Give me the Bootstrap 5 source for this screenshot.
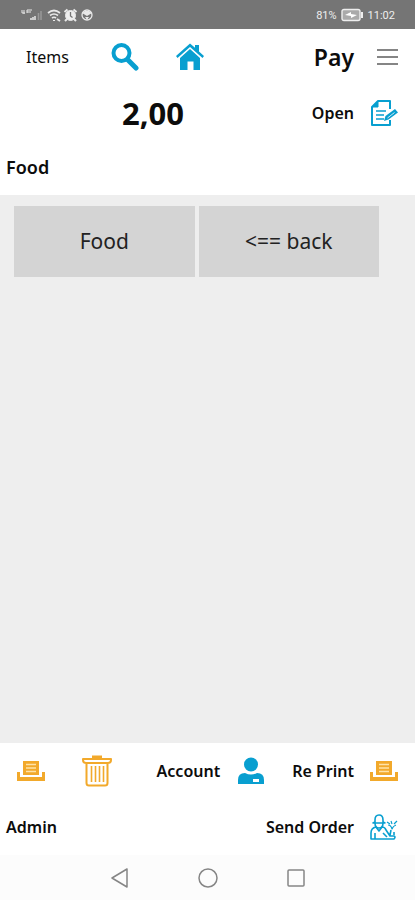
<!DOCTYPE html>
<html lang="en">
<head>
<meta charset="utf-8">
<meta name="viewport" content="width=device-width, initial-scale=1">
<title>Items</title>
<link rel="stylesheet" href="https://cdn.jsdelivr.net/npm/bootstrap@5.3.0/dist/css/bootstrap.min.css">
<style>
  body { font-family: "Noto Sans", "Open Sans", sans-serif; color: #0c0c0c; background: #fff; }
  button { font: inherit; color: inherit; border: 0; background: none; padding: 0; }
  svg { display: block; flex: none; }
  .status { height: 29px; background: #757575; color: #eee; padding: 1px 20px 0; font: 11px "Roboto", sans-serif; }
  .bar-row { height: 56px; }
  .bar-row.short { height: 55px; }
  .bar-row button { font-size: 16px; line-height: 24px; font-weight: 600; white-space: nowrap; }
  .bar-row .items { font-size: 16px; font-weight: 400; padding-left: 26px; width: 92px; text-align: left; }
  .bar-row .pay { font-size: 23px; }
  .c-icon { width: 61px; display: flex; justify-content: center; }
  .c-icon.last { justify-content: flex-end; padding-right: 17px; }
  .c-icon.wide { width: 72px; }
  .c-icon.lead-in { justify-content: flex-start; padding-left: 18px; }
  .c-icon.head { width: 65px; }
  .total { flex: 1; font-size: 31px; font-weight: 700; line-height: 40px; padding-left: 122px; }
  .path { font-size: 18px; font-weight: 600; padding: 0 6px; }
  .admin { margin-left: 6px; }
  .stage { background: #eee; padding: 11px 36px 11px 14px; }
  .tile { height: 71px; background: #d4d4d4; font-size: 21px; color: #222; }
  .tiles { gap: 4px; }
  .sysnav { height: 45px; background: #fcfcfc; }
  .sysnav button { width: 88px; display: flex; justify-content: center; }
  .blue { color: #089fd0; } .gold { color: #f2a92b; } .gray { color: #858585; }
</style>
</head>
<body class="d-flex flex-column min-vh-100">
<svg class="d-none" aria-hidden="true">
  <symbol id="printer" viewBox="0 0 28 22">
    <path d="M0 12h3v5h22v-5h3v9H0z" fill="currentColor"/>
    <path d="M6 1h16v14H6z" fill="currentColor"/><path d="M9 4.500h10M9 8h10M9 11.500h10" stroke="#ffe3a8" stroke-width="1.300"/>
  </symbol>
</svg>
<div class="status d-flex justify-content-between align-items-center">
  <svg width="76" height="16" viewBox="0 0 76 16" fill="none" stroke="#e8e8e8">
    <path d="M2 3v3h3M4 3v4M7 3h5M7 5h4M7 3v3" stroke-width="1"/>
    <path d="M11 13v-2M13 13v-3M15 13V9" stroke-width="1.500"/><path d="M18.500 13V6M21 13V4" stroke="#999" stroke-width="1.500"/>
    <path d="M28 6q6-5 12 0M30 8.500q4-3 8 0M32 11q2-1.500 4 0" stroke-width="1.700"/><path d="M34 13v1M37 12l3 2" stroke-width="2"/>
    <circle cx="50.500" cy="8.500" r="5" fill="#eee"/><path d="M44.500 5l3-2.500M56.500 5l-3-2.500M45 14l2-2M56 14l-2-2" stroke-width="2"/><path d="M50.500 5v4l2 1.500" stroke="#757575" stroke-width="1.300"/>
    <circle cx="67" cy="8" r="5" stroke-width="1.300"/><path d="M62 6l5 3 5-3-3-2h-4zM65 10h4l-2 3z" fill="#e8e8e8" stroke="none"/>
  </svg>
  <div class="d-flex align-items-center">
    <span>81%</span>
    <svg class="ms-1 me-1" width="23" height="14" viewBox="0 0 23 14"><rect x="1" y="1.500" width="18" height="11" rx="2" fill="#aaa" stroke="#eee" stroke-width="1.400"/><path d="M21 4v6" stroke="#eee" stroke-width="2"/><path d="M4 7l6-3v2l6 1-6 3V8z" fill="#fff"/></svg>
    <span>11:02</span>
  </div>
</div>
<header>
  <div class="bar-row d-flex align-items-center">
    <button class="items">Items</button>
    <div class="c-icon head"><button class="blue" aria-label="Search"><svg width="28" height="28" viewBox="0 0 28 28" fill="none" stroke="currentColor"><circle cx="10.500" cy="10" r="8" stroke-width="4"/><path d="M17 17l8 8" stroke-width="5" stroke-linecap="round"/></svg></button></div>
    <div class="c-icon head me-auto"><button class="blue" aria-label="Home"><svg width="28" height="28" viewBox="0 0 28 28" fill="currentColor"><path d="M0 13L14 .500l5 4.300V2h4v6.500L28 13l-1.500 2L14 4 1.500 15z"/><path d="M4 15L14 6l10 9v12h-6.500v-8.500h-6V27H4z"/></svg></button></div>
    <button class="pay">Pay</button>
    <div class="c-icon last"><button class="gray" aria-label="Menu"><svg width="21" height="20" viewBox="0 0 21 20" stroke="currentColor" stroke-width="2"><path d="M0 3h21M0 10h21M0 17h21"/></svg></button></div>
  </div>
  <div class="bar-row short d-flex align-items-center">
    <div class="total">2,00</div>
    <button>Open</button>
    <div class="c-icon last"><button class="blue" aria-label="Edit order"><svg width="28" height="28" viewBox="0 0 28 28" fill="none" stroke="currentColor" stroke-width="2"><path d="M20 10V2H8L2 8v18h18v-5" stroke-linejoin="round"/><path d="M8 2v6H2z" fill="currentColor" stroke-width="1"/><path d="M6 12h10M6 16h8M6 20h8" stroke-width="1.500"/><path d="M14 22l1.500-5 9.500-7 3 3.500-9.500 7z" fill="currentColor" stroke="none"/><path d="M17.500 19l7-5.500" stroke="#fff" stroke-width=".800"/></svg></button></div>
  </div>
  <div class="bar-row short d-flex align-items-center"><div class="path">Food</div></div>
</header>
<main class="stage flex-grow-1">
  <div class="tiles d-flex">
    <button class="tile w-50">Food</button>
    <button class="tile w-50">&lt;== back</button>
  </div>
</main>
<footer>
  <div class="bar-row d-flex align-items-center">
    <div class="c-icon"><button class="gold" aria-label="Print"><svg width="28" height="22"><use href="#printer"/></svg></button></div>
    <div class="c-icon wide me-auto"><button class="gold" aria-label="Delete"><svg width="30" height="32" viewBox="0 0 30 32" fill="none" stroke="currentColor" stroke-width="2"><path d="M11 3V1.500h8V3z" fill="currentColor"/><path d="M1 4h28v1q0 3-3 3H4Q1 8 1 5zM4.500 8v20q0 2.500 2.500 2.500h16q2.500 0 2.500-2.500V8" stroke-linejoin="round"/><path d="M9.500 11v16M13.500 11v16M17.500 11v16M21.500 11v16" stroke-width="1.600"/></svg></button></div>
    <button>Account</button>
    <div class="c-icon wide lead-in"><button class="blue" aria-label="Account profile"><svg width="26" height="28" viewBox="0 0 26 28" fill="currentColor"><circle cx="13" cy="7.500" r="7"/><path d="M0 27v-4q0-7 7-7 6 3 12 0 7 0 7 7v4z"/><path d="M15 22h6v3h-6z" fill="#fff"/></svg></button></div>
    <button>Re Print</button>
    <div class="c-icon last"><button class="gold" aria-label="Print again"><svg width="28" height="22"><use href="#printer"/></svg></button></div>
  </div>
  <div class="bar-row d-flex align-items-center">
    <button class="admin me-auto">Admin</button>
    <button>Send Order</button>
    <div class="c-icon last"><button class="blue" aria-label="Send to waiter"><svg width="28" height="28" viewBox="0 0 28 28" fill="none" stroke="currentColor" stroke-width="1.600" stroke-linejoin="round"><path d="M3 10l2-1V7q0-5 4-5t4 5v2l2 1zM5 10q0 5 4 5t4-5"/><path d="M6 14q-5 1-5 6v6h23q2-2 0-3h-4l-4-6q-1-3-4-3l-3 4zM5 20v6M13 20l4 4M20 22l1-5M24 22v-3"/><path d="M18 12q3 0 4 4 1-3 4-4M17 9l3 2M21 8l1 3M27 8l-3 3" stroke-width="1.200"/></svg></button></div>
  </div>
</footer>
<nav class="sysnav d-flex justify-content-center align-items-center gray" aria-label="System">
  <button aria-label="Back"><svg width="20" height="20" viewBox="0 0 20 20" fill="none" stroke="currentColor" stroke-width="1.500" stroke-linejoin="round"><path d="M17 1v18L2 10z"/></svg></button>
  <button aria-label="Home screen"><svg width="20" height="20" viewBox="0 0 20 20" fill="none" stroke="currentColor" stroke-width="1.500"><circle cx="10" cy="10" r="9"/></svg></button>
  <button aria-label="Recent apps"><svg width="20" height="20" viewBox="0 0 20 20" fill="none" stroke="currentColor" stroke-width="1.500"><rect x="2" y="2" width="16" height="16" rx="1"/></svg></button>
</nav>
<script src="https://cdn.jsdelivr.net/npm/bootstrap@5.3.0/dist/js/bootstrap.bundle.min.js"></script>
</body>
</html>
